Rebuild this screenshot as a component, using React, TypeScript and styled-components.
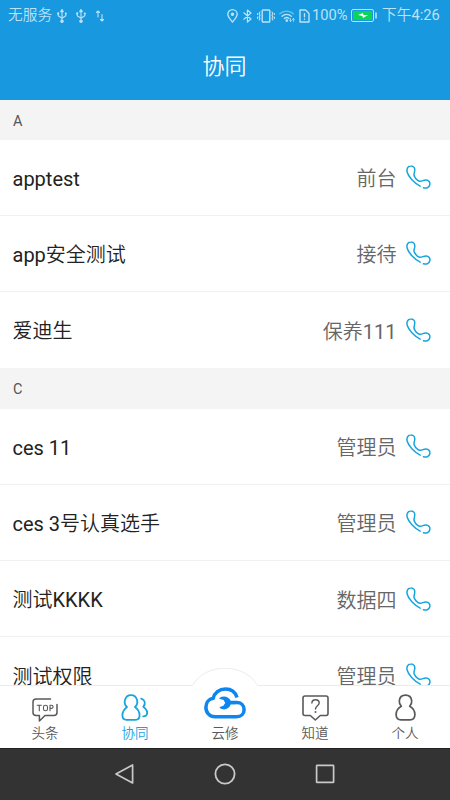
import React from "react";
import styled, { createGlobalStyle } from "styled-components";

const GlobalStyle = createGlobalStyle`
  * { box-sizing: border-box; }
  body { margin: 0; background: #fff; }
`;

const Screen = styled.div`
  width: 450px;
  height: 800px;
  display: flex;
  flex-direction: column;
  overflow: hidden;
  background: #fff;
  font-family: Roboto, "Noto Sans CJK SC DemiLight", "Noto Sans CJK SC", sans-serif;
`;

const Header = styled.header`
  flex: none;
  height: 100px;
  background: #1898de;
  color: #fff;
`;

const StatusBar = styled.div`
  height: 31px;
  padding: 0 9px 0 8px;
  display: flex;
  align-items: center;
  justify-content: space-between;
  color: #bce2f7;
  font-size: 14.7px;
  line-height: 31px;
`;

const StatusGroup = styled.div`
  display: flex;
  align-items: center;
  white-space: nowrap;
`;

const StatusText = styled.span<{ $width: number; $ml?: number }>`
  width: ${(p) => p.$width}px;
  margin-left: ${(p) => p.$ml ?? 0}px;
`;

const Glyph = styled.svg<{ $ml?: number }>`
  display: block;
  flex: none;
  margin-left: ${(p) => p.$ml ?? 0}px;
  overflow: visible;
  fill: none;
  stroke: currentColor;
  stroke-linecap: round;
  stroke-linejoin: round;
`;

const Title = styled.h1`
  margin: 0;
  height: 69px;
  line-height: 71px;
  padding-right: 1px;
  text-align: center;
  font-size: 22px;
  font-weight: 400;
`;

const List = styled.main`
  flex: 1;
  min-height: 0;
  overflow: hidden;
`;

const SectionHead = styled.div<{ $height: number }>`
  height: ${(p) => p.$height}px;
  padding: 3px 13px 0;
  display: flex;
  align-items: center;
  background: #f4f4f4;
  color: #555;
  font-size: 14.5px;
`;

const Row = styled.div<{ $height: number }>`
  height: ${(p) => p.$height}px;
  padding: 3px 19.5px 0 12.5px;
  display: flex;
  align-items: center;
  border-bottom: 1px solid #f1f1f1;
  &:last-child { border-bottom: 0; }
`;

const Name = styled.span`
  flex: 1;
  font-size: 20px;
  line-height: 30px;
  color: #222;
`;

const Role = styled.span`
  font-size: 20px;
  line-height: 30px;
  color: #666;
  margin: 1px 9px 0 0;
`;

const Phone = styled(Glyph)`
  color: #16a5df;
  margin-top: -2px;
`;

const TabBar = styled.nav`
  position: relative;
  flex: none;
  height: 62.5px;
  display: grid;
  grid-template-columns: repeat(5, 1fr);
  background: #fff;
  border-top: 1px solid #ececec;
`;

const Hump = styled.svg`
  position: absolute;
  left: 190px;
  top: -18px;
  width: 70px;
  height: 22px;
`;

const Tab = styled.div<{ $active?: boolean }>`
  position: relative;
  display: flex;
  flex-direction: column;
  align-items: center;
  color: ${(p) => (p.$active ? "#16a5df" : "#595959")};
`;

const IconSlot = styled.div<{ $top: number }>`
  height: 38px;
  padding-top: ${(p) => p.$top}px;
`;

const TabLabel = styled.span`
  font-size: 13.5px;
  line-height: 18px;
`;

const NavBar = styled.div`
  flex: none;
  height: 52.5px;
  display: flex;
  align-items: center;
  justify-content: center;
  gap: 76px;
  background: #333;
  border-top: 1px solid #222;
  color: #c9c9c9;
`;

const PhoneIcon = () => (
  <Phone width="25" height="25" viewBox="0 0 25 25" strokeWidth="1.5">
    <path d="M14.2 21.2C8.2 18.2 2.4 11.8 1.2 7.3C.3 3.8 1.8 1 4.8 1C7.8.9 9.2 3 8.7 6C8.4 8.1 7.4 9.4 8.3 11.2C9.4 13.4 11.4 15.9 13.8 16.2C16.3 16.5 17.3 14.8 20 14.9C22.9 15 24.4 17.3 23.8 19.8C23.1 22.9 20.2 23.5 17.4 22.8" />
  </Phone>
);

const UsbIcon = ({ ml }: { ml: number }) => (
  <Glyph $ml={ml} width="10" height="14" viewBox="0 0 10 14" strokeWidth="1.1">
    <path d="M5 2v10M1.2 4.5v2.3L5 9.3l3.8-2.5V4.5" />
    <path d="M3.7 2.6 5 .5l1.3 2.1z" fill="currentColor" />
    <circle cx="5" cy="12.2" r="1.2" fill="currentColor" />
    <circle cx="1.2" cy="4.4" r=".6" fill="currentColor" />
    <path d="M8.4 4h.8v.8h-.8z" />
  </Glyph>
);

const TopIcon = () => (
  <Glyph width="26" height="25" viewBox="0 0 26 25" strokeWidth="1.5">
    <path d="M18.5 1H4Q1 1 1 4v10.5Q1 17.5 4 17.5h3.4V23l5.6-5.5h8.8Q25 17.5 25 14.5V6.5" />
    <path d="M5.2 7.2h4.2M7.3 7.2v5.6M18 12.8V7.2h1.5a1.6 1.6 0 0 1 0 3.2H18" strokeWidth="1.1" />
    <rect x="11.5" y="7.2" width="4" height="5.6" rx="1.9" strokeWidth="1.1" />
  </Glyph>
);

const PeopleIcon = () => (
  <Glyph width="28" height="27" viewBox="0 0 28 27" strokeWidth="1.8">
    <path d="M6 13C3.8 10.8 3.2 8.4 4 5.9C4.9 2.9 7 1.2 10 1.2S15.1 2.9 16 5.9C16.8 8.4 16.2 10.8 14 13C17.1 15.3 18.7 18 18.6 21.5C18.5 24.3 17.1 25.8 14.6 25.8H5.4C2.9 25.8 1.5 24.3 1.4 21.5C1.3 18 2.9 15.3 6 13Z" />
    <path d="M20.2 4.6C24 5.6 25 9.6 22.3 12.8C25.8 15.6 27 18.4 25.7 20.8C25 22 23.8 22.4 22.2 22.3" />
  </Glyph>
);

const CloudIcon = () => (
  <Glyph width="42" height="32" viewBox="0 0 42 32" strokeWidth="3.5">
    <path
      stroke="#0d86f0"
      strokeLinecap="butt"
      d="M33 10.5C31.4 5.2 27 2 21.5 2C15.2 2 10.4 6 9.2 11.3C4.7 12 1.9 15.9 1.9 20.2C1.9 25.8 5.8 29.8 11 29.8H32.6C37 29.8 40.1 26.9 40.1 22.7C40.1 18.5 37 15.6 32.8 15.6H25"
    />
    <path
      fill="#0d86f0"
      stroke="none"
      d="M15.4 10.9C19.6 8.2 24.8 9.6 26.8 13.9H32v3.4h-5.2C25 22.4 19.6 24 15.6 20.8L15.8 19.9L19.4 18.8L21.2 16.1L19.6 12.9L15.4 11.8z"
    />
  </Glyph>
);

const QuestionIcon = () => (
  <Glyph width="27" height="26" viewBox="0 0 27 26" strokeWidth="1.6">
    <path d="M3 1h21q2 0 2 2v15.5q0 2-2 2h-5.7L13.3 25l-5-4.5H3q-2 0-2-2V3q0-2 2-2z" />
    <path d="M9.9 8c.1-4.5 7.3-4.3 7.3 0c0 2.5-3.7 3-3.7 6" strokeWidth="1.4" />
    <circle cx="13.5" cy="17" r="1" fill="currentColor" stroke="none" />
  </Glyph>
);

const PersonIcon = () => (
  <Glyph width="21" height="27" viewBox="0 0 21 27" strokeWidth="1.7">
    <path d="M6.3 12.3C4.8 10.6 4.1 8.8 4.3 6.8C4.7 3.4 7 1.2 10.5 1.2S16.3 3.4 16.7 6.8C16.9 8.8 16.2 10.6 14.7 12.3C18.2 14.3 20 17.2 19.9 20.7C19.8 24 18 25.8 15 25.8H6C3 25.8 1.2 24 1.1 20.7C1 17.2 2.8 14.3 6.3 12.3Z" />
  </Glyph>
);

const sections = [
  {
    letter: "A",
    headHeight: 40,
    rowHeight: 75.9,
    people: [
      { name: "apptest", role: "前台" },
      { name: "app安全测试", role: "接待" },
      { name: "爱迪生", role: "保养111" },
    ],
  },
  {
    letter: "C",
    headHeight: 41,
    rowHeight: 76.2,
    people: [
      { name: "ces 11", role: "管理员" },
      { name: "ces 3号认真选手", role: "管理员" },
      { name: "测试KKKK", role: "数据四" },
      { name: "测试权限", role: "管理员" },
    ],
  },
];

const tabs = [
  { label: "头条", top: 11.5, icon: <TopIcon /> },
  { label: "协同", top: 7.5, icon: <PeopleIcon />, active: true },
  { label: "云修", top: 1, icon: <CloudIcon /> },
  { label: "知道", top: 8.5, icon: <QuestionIcon /> },
  { label: "个人", top: 7.5, icon: <PersonIcon /> },
];

export default function App() {
  return (
    <Screen>
      <GlobalStyle />
      <Header>
        <StatusBar>
          <StatusGroup>
            <StatusText $width={44}>无服务</StatusText>
            <UsbIcon ml={5} />
            <UsbIcon ml={9} />
            <Glyph $ml={10} width="10" height="12" viewBox="0 0 10 12" strokeWidth="1.1">
              <path d="M2 7V1M.5 2.5 2 1l1.5 1.5M6 4.5V11M4.5 9.5 6 11l1.5-1.5" />
            </Glyph>
          </StatusGroup>
          <StatusGroup>
            <Glyph width="11" height="14" viewBox="0 0 11 14" strokeWidth="1.4">
              <path d="M5.5 13C3 10 .8 7.8.8 5.3a4.7 4.7 0 0 1 9.4 0C10.2 7.8 8 10 5.5 13z" />
              <circle cx="5.5" cy="5.3" r="1" fill="currentColor" />
            </Glyph>
            <Glyph $ml={5} width="9" height="14" viewBox="0 0 9 14" strokeWidth="1.2">
              <path d="M.8 3.8 8 10l-3.6 3V1L8 4 .8 10.2" />
            </Glyph>
            <Glyph $ml={5} width="18" height="14" viewBox="0 0 18 14" strokeWidth="1.4">
              <rect x="5.2" y="1" width="7.6" height="12" rx=".8" />
              <path d="M3 3l-.8 1.6.8 1.6-.8 1.6.8 1.6-.8 1.6M.6 4.5v1M.6 8v1.4M15 3l.8 1.6-.8 1.6.8 1.6-.8 1.6.8 1.6M17.4 4.5v1M17.4 8v1.4" strokeWidth="1.1" />
            </Glyph>
            <Glyph $ml={4} width="16" height="12" viewBox="0 0 16 12" strokeWidth="1.3">
              <path d="M.8 3.8C4.6.2 10.8.2 14.4 3.8" opacity=".55" />
              <path d="M3 6.2c2.7-2.5 6.7-2.5 9.3 0M5.4 8.5c1.3-1.2 3.2-1.2 4.5 0" />
              <circle cx="7.8" cy="10.6" r=".7" fill="currentColor" />
              <path d="M11.5 8.5v3M10.6 10.5l.9 1 .9-1M14.4 11.5v-3M13.5 9.5l.9-1 .9 1" strokeWidth=".8" />
            </Glyph>
            <Glyph $ml={4} width="11" height="14" viewBox="0 0 11 14" strokeWidth="1.4">
              <path d="M1 1h5.6L10 4.4V13H1z" />
              <path d="M5.5 4.7v3M5.5 10v.3" />
            </Glyph>
            <StatusText $ml={2} $width={36}>100%</StatusText>
            <Glyph $ml={3} width="26" height="13" viewBox="0 0 26 13" strokeWidth="1">
              <rect x=".5" y=".5" width="22" height="12" rx="1.5" />
              <rect x="2" y="2" width="19" height="9" fill="#0bd45a" stroke="none" />
              <path d="M25 4v5" strokeWidth="1.6" />
              <path d="m7 6 5-2 .5 2H17l-5 3-.6-2z" fill="#fff" stroke="none" />
            </Glyph>
            <StatusText $ml={5} $width={59}>下午4:26</StatusText>
          </StatusGroup>
        </StatusBar>
        <Title>协同</Title>
      </Header>
      <List>
        {sections.map((s) => (
          <section key={s.letter}>
            <SectionHead $height={s.headHeight}>{s.letter}</SectionHead>
            {s.people.map((p) => (
              <Row key={p.name} $height={s.rowHeight}>
                <Name>{p.name}</Name>
                <Role>{p.role}</Role>
                <PhoneIcon />
              </Row>
            ))}
          </section>
        ))}
      </List>
      <TabBar>
        <Hump viewBox="0 0 70 22">
          <path d="M0 22V18C5 16 7 13 11 9C25-3 45-3 59 9C63 13 65 16 70 18V22z" fill="#fff" />
          <path d="M0 17.5H2.5C15-5.5 55-5.5 67.5 17.5H70" fill="none" stroke="#ececec" />
        </Hump>
        {tabs.map((t) => (
          <Tab key={t.label} $active={t.active}>
            <IconSlot $top={t.top}>{t.icon}</IconSlot>
            <TabLabel>{t.label}</TabLabel>
          </Tab>
        ))}
      </TabBar>
      <NavBar>
        <Glyph width="24" height="24" viewBox="0 0 24 24" strokeWidth="1.7">
          <path d="M19.6 3v18L3 12z" />
        </Glyph>
        <Glyph width="24" height="24" viewBox="0 0 24 24" strokeWidth="1.8">
          <circle cx="12" cy="12" r="9.6" />
        </Glyph>
        <Glyph width="24" height="24" viewBox="0 0 24 24" strokeWidth="1.7">
          <rect x="3.6" y="3.4" width="17" height="17" rx=".5" />
        </Glyph>
      </NavBar>
    </Screen>
  );
}
